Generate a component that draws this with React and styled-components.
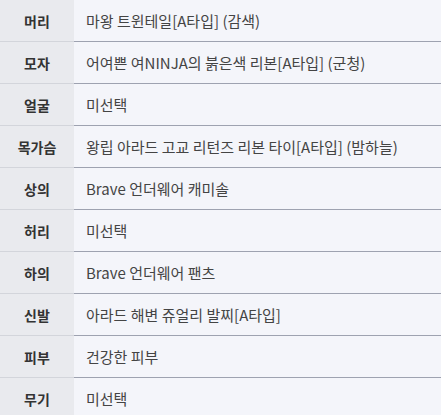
import React from "react";
import styled, { createGlobalStyle } from "styled-components";

const Global = createGlobalStyle`
  html, body { margin: 0; padding: 0; background: #ffffff; }
  body { font-family: "Noto Sans CJK KR", "Noto Sans", sans-serif; }
`;

const Table = styled.div`
  display: grid;
  grid-template-columns: 74px 1fr;
  width: 441px;
`;

const Label = styled.div`
  height: 41px;
  border-bottom: 1px solid #d3d5db;
  background: #e9eaee;
  color: #333;
  font-size: 14px;
  font-weight: 700;
  display: flex;
  align-items: center;
  justify-content: center;
`;

const Value = styled.div`
  height: 41px;
  border-bottom: 1px solid #9ea2b0;
  background: #f4f5fa;
  color: #444;
  font-size: 15px;
  display: flex;
  align-items: center;
  padding-left: 12px;
  white-space: nowrap;
`;

const rows = [
  ["머리", "마왕 트윈테일[A타입] (감색)"],
  ["모자", "어여쁜 여NINJA의 붉은색 리본[A타입] (군청)"],
  ["얼굴", "미선택"],
  ["목가슴", "왕립 아라드 고교 리턴즈 리본 타이[A타입] (밤하늘)"],
  ["상의", "Brave 언더웨어 캐미솔"],
  ["허리", "미선택"],
  ["하의", "Brave 언더웨어 팬츠"],
  ["신발", "아라드 해변 쥬얼리 발찌[A타입]"],
  ["피부", "건강한 피부"],
  ["무기", "미선택"],
];

export default function App() {
  return (
    <>
      <Global />
      <Table>
        {rows.map(([k, v]) => (
          <React.Fragment key={k}>
            <Label>{k}</Label>
            <Value>{v}</Value>
          </React.Fragment>
        ))}
      </Table>
    </>
  );
}
